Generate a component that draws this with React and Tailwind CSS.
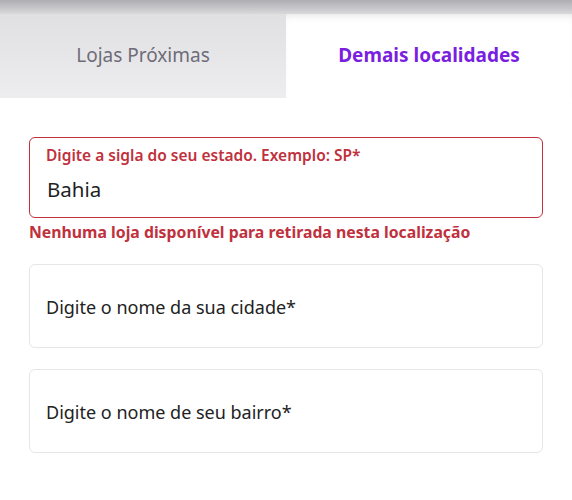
import React from 'react';

const Field = ({ label, value, error }) => (
    <div
        className={`rounded-md border bg-white px-4 ${
            error ? 'border-[#c0313d] pt-[7px] pb-[14px]' : 'border-[#e6e6e8] h-[84px] flex items-center'
        }`}
    >
        {error ? (
            <>
                <p className="text-[15.5px] font-semibold text-[#c0313d] leading-5">{label}</p>
                <p className="text-[20.5px] text-[#1f1f1f] leading-7 mt-[10px] pl-[1px]">{value}</p>
            </>
        ) : (
            <p className="text-[18px] text-[#222] leading-6 pt-[2px]">{label}</p>
        )}
    </div>
);

const App = () => {
    return (
        <div className="w-[572px] h-[500px] bg-white overflow-hidden" style={{ fontFamily: '"Noto Sans", sans-serif' }}>
            <div className="h-[14px] bg-gradient-to-b from-[#adadb2] to-[#d9d9dc]" />
            <div className="flex h-[84px]">
                <div className="flex-1 bg-gradient-to-b from-[#e0e0e3] to-[#ededef] flex items-center justify-center pb-[2px]">
                    <span className="text-[19px] text-[#6e6c78]">Lojas Próximas</span>
                </div>
                <div className="flex-1 bg-white shadow-[inset_0_6px_10px_-6px_rgba(0,0,0,0.15)] flex items-center justify-center pb-[2px]">
                    <span className="text-[19px] font-bold text-[#7a1fdf]">Demais localidades</span>
                </div>
            </div>

            <div className="px-[29px] pt-[39px]">
                <Field error label="Digite a sigla do seu estado. Exemplo: SP*" value="Bahia" />
                <p className="mt-[4px] text-[15.8px] font-bold text-[#c0313d] leading-5">
                    Nenhuma loja disponível para retirada nesta localização
                </p>
                <div className="mt-[22px] flex flex-col gap-[21px]">
                    <Field label="Digite o nome da sua cidade*" />
                    <Field label="Digite o nome de seu bairro*" />
                </div>
            </div>
        </div>
    );
};

export default App;
